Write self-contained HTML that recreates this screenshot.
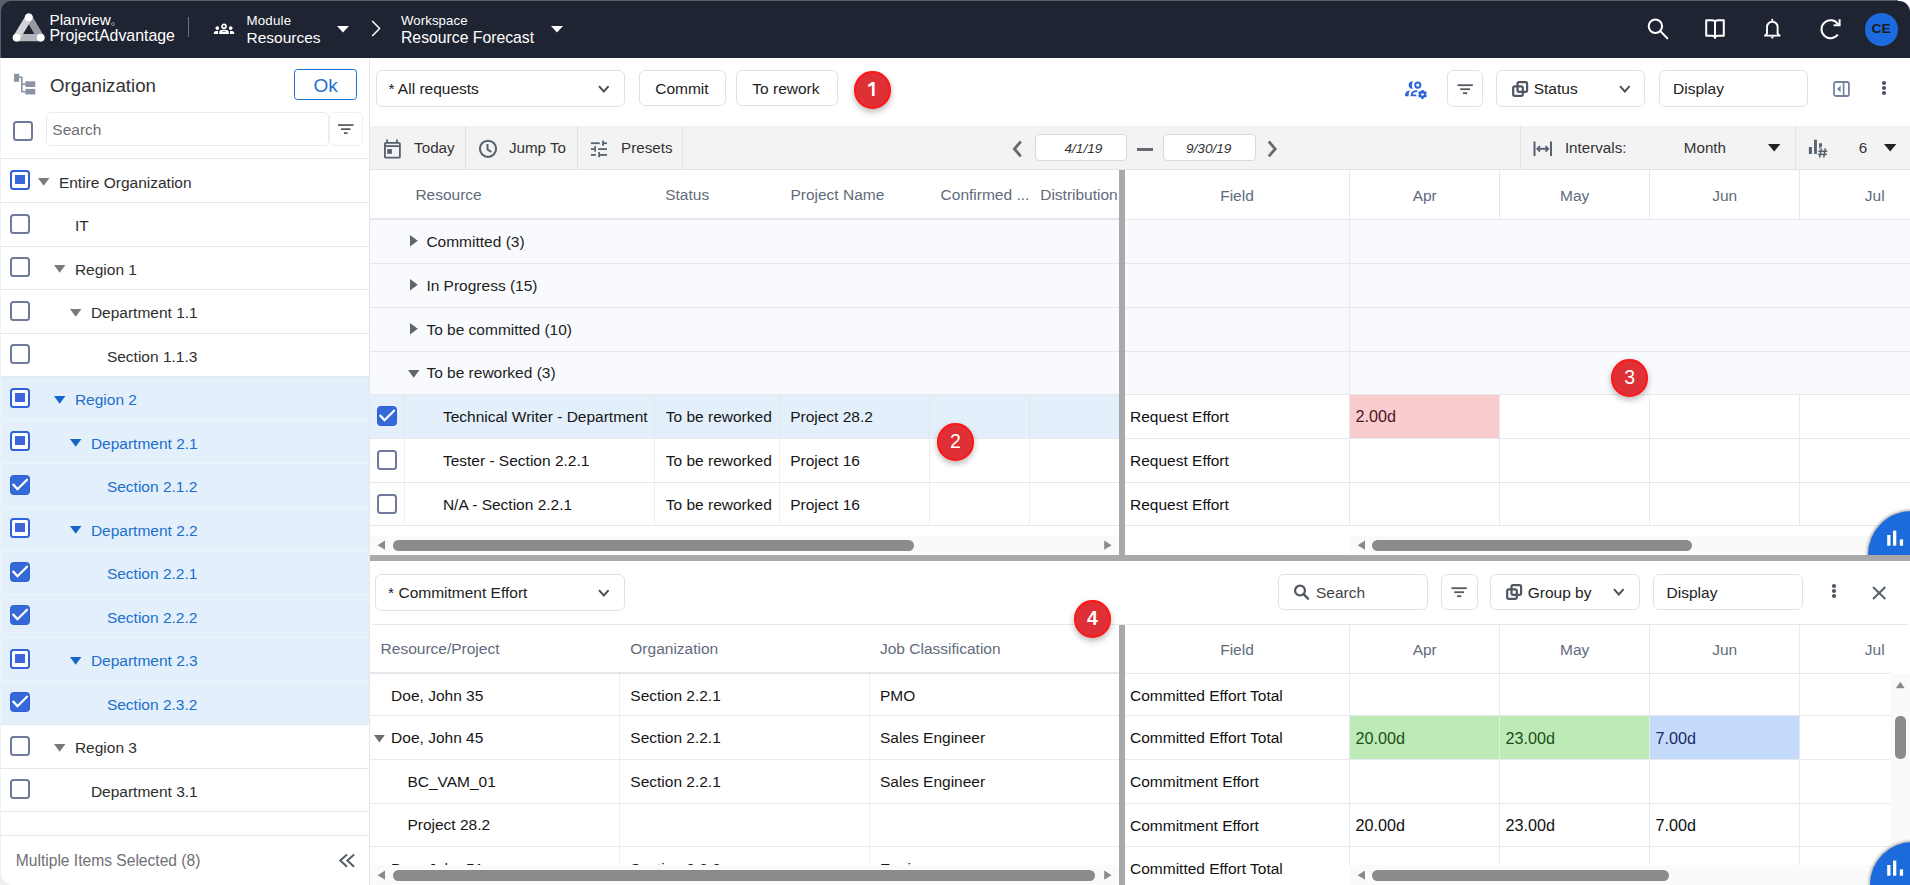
<!DOCTYPE html><html><head><meta charset="utf-8"><title>Resource Forecast</title><style>
*{box-sizing:border-box;margin:0;padding:0}
html,body{width:1910px;height:885px;overflow:hidden;background:#fff;font-family:"Liberation Sans", sans-serif;color:#222}
.a{position:absolute}
.t{position:absolute;white-space:nowrap}
svg{overflow:visible}
</style></head><body>
<div class="a" style="left:0px;top:0px;width:1910px;height:58px;background:#5b5f69;"></div>
<div class="a" style="left:0px;top:0px;width:1910px;height:58px;background:#1f2433;border-radius:10px 10px 0 0;top:1px;left:1px;width:1909px;height:57px"></div>
<div class="a" style="left:1898px;top:0px;width:12px;height:20px;background:#fff;"></div>
<div class="a" style="left:1870px;top:1px;width:40px;height:57px;background:#1f2433;border-radius:0 11px 0 0"></div>
<svg class="a" style="left:0px;top:0px;" width="60" height="58" viewBox="0 0 60 58"><line x1="28.8" y1="17.3" x2="40.7" y2="37.6" stroke="#989aa3" stroke-width="7.2" stroke-linecap="round"/><line x1="16.6" y1="37.6" x2="40.7" y2="37.6" stroke="#b4b6bc" stroke-width="7.2" stroke-linecap="round"/><line x1="28.8" y1="17.3" x2="16.6" y2="37.6" stroke="#d2d4d9" stroke-width="7.2" stroke-linecap="round"/><circle cx="28.8" cy="17.3" r="3.9" fill="#fff"/><circle cx="16.6" cy="37.6" r="3.9" fill="#fff"/><circle cx="40.7" cy="37.6" r="3.9" fill="#fff"/></svg>
<span class="t" style="left:49.5px;top:12px;font-size:15.3px;line-height:15.3px;color:#fff;">Planview</span>
<div class="a" style="left:110.5px;top:21.5px;width:4px;height:4px;border-radius:50%;border:1px solid #8a8d96"></div>
<span class="t" style="left:49.5px;top:28px;font-size:15.9px;line-height:15.9px;color:#fff;">ProjectAdvantage</span>
<div class="a" style="left:188px;top:17px;width:1px;height:20px;background:#6b707a;"></div>
<svg class="a" style="left:213px;top:23px;" width="22" height="12" viewBox="0 0 22 12"><circle cx="11" cy="3.4" r="1.95" fill="none" stroke="#fff" stroke-width="1.7"/><path d="M6,11.1 L6.5,8.1 Q6.8,6.9 8.4,6.9 H13.6 Q15.2,6.9 15.5,8.1 L16,11.1 Z" fill="#fff"/><ellipse cx="11" cy="8.6" rx="2.2" ry="0.5" fill="#7d818a"/><circle cx="4.3" cy="5.1" r="1.85" fill="#fff"/><circle cx="17.7" cy="5.1" r="1.85" fill="#fff"/><path d="M0.8,11.1 V9.8 Q1,8.1 3,8 H5 V11.1 Z" fill="#fff"/><path d="M21.2,11.1 V9.8 Q21,8.1 19,8 H17 V11.1 Z" fill="#fff"/></svg>
<span class="t" style="left:246.5px;top:14px;font-size:13.3px;line-height:13.3px;color:#fff;font-weight:normal;letter-spacing:0.2px">Module</span>
<span class="t" style="left:246.5px;top:29.6px;font-size:15.5px;line-height:15.5px;color:#fff;">Resources</span>
<svg class="a" style="left:337px;top:26px;" width="12" height="7" viewBox="0 0 12 7"><polygon points="0,0 12,0 6,6.5" fill="#fff"/></svg>
<svg class="a" style="left:371px;top:20px;" width="10" height="17" viewBox="0 0 10 17"><polyline points="1.2,1 8.6,8.5 1.2,16" fill="none" stroke="#fff" stroke-width="1.5"/></svg>
<span class="t" style="left:401px;top:14px;font-size:13.2px;line-height:13.2px;color:#fff;letter-spacing:0.1px">Workspace</span>
<span class="t" style="left:401px;top:29.6px;font-size:15.75px;line-height:15.75px;color:#fff;">Resource Forecast</span>
<svg class="a" style="left:550.5px;top:26px;" width="12" height="7" viewBox="0 0 12 7"><polygon points="0,0 12,0 6,6.5" fill="#fff"/></svg>
<svg class="a" style="left:1640px;top:10px;" width="40" height="40" viewBox="0 0 40 40"><circle cx="15.4" cy="16.2" r="6.7" fill="none" stroke="#fff" stroke-width="2"/><line x1="20.3" y1="21.1" x2="27.3" y2="28.2" stroke="#fff" stroke-width="2" stroke-linecap="round"/></svg>
<svg class="a" style="left:1700px;top:10px;" width="30" height="40" viewBox="0 0 30 40"><path d="M6.2,10.2 H12 Q15,10.2 15,12 Q15,10.2 18,10.2 H23.8 V25.8 H18 Q15,25.8 15,28 Q15,25.8 12,25.8 H6.2 Z" fill="none" stroke="#fff" stroke-width="2" stroke-linejoin="round"/><line x1="15" y1="12" x2="15" y2="27.5" stroke="#fff" stroke-width="2"/></svg>
<svg class="a" style="left:1760px;top:10px;" width="30" height="40" viewBox="0 0 30 40"><path d="M4.9,25.6 L7,23.6 V17 A5.3,5.3 0 0 1 17.6,17 V23.6 L19.7,25.6 Z" fill="none" stroke="#fff" stroke-width="1.9" stroke-linejoin="round"/><line x1="12.3" y1="8.8" x2="12.3" y2="11.6" stroke="#fff" stroke-width="1.7"/><polygon points="10.4,26.4 14.2,26.4 12.3,28.9" fill="#fff"/></svg>
<svg class="a" style="left:1815px;top:14px;" width="30" height="30" viewBox="0 0 30 30"><path d="M23.2,10.5 A9,9 0 1 0 22.8,20.5" fill="none" stroke="#fff" stroke-width="2"/><polyline points="24.6,5.2 24.6,11.2 18.6,11.2" fill="none" stroke="#fff" stroke-width="2"/></svg>
<div class="a" style="left:1864.8px;top:12.8px;width:32.8px;height:32.8px;border-radius:50%;background:#1b6bde"></div>
<span class="t" style="left:1871.6px;top:22.200000000000003px;font-size:13.7px;line-height:13.7px;color:#1b1b1b;font-weight:bold">CE</span>
<div class="a" style="left:0px;top:58px;width:369px;height:827px;background:#fff;"></div>
<div class="a" style="left:369px;top:58px;width:1px;height:827px;background:#e3e6ea;"></div>
<svg class="a" style="left:10px;top:70px;" width="30" height="30" viewBox="0 0 30 30"><rect x="4" y="3.8" width="5.2" height="8" fill="#8a94a3"/><rect x="15.3" y="11.3" width="10" height="5.7" fill="#8a94a3"/><rect x="15.3" y="18.9" width="10" height="5.6" fill="#8a94a3"/><polyline points="9,7.3 11.8,7.3 11.8,21.7 15.5,21.7" fill="none" stroke="#8a94a3" stroke-width="1.6"/><line x1="11.8" y1="14.2" x2="15.5" y2="14.2" stroke="#8a94a3" stroke-width="1.6"/></svg>
<span class="t" style="left:50px;top:77px;font-size:18.7px;line-height:18.7px;color:#333;">Organization</span>
<div class="a" style="left:294px;top:68.8px;width:63.19999999999999px;height:31.400000000000006px;background:#fff;border:1.4px solid #1870d0;border-radius:3.5px"></div>
<span class="t" style="left:313.5px;top:76.3px;font-size:19px;line-height:19px;color:#1f6fd1;">Ok</span>
<div class="a" style="left:13px;top:121px;width:20px;height:20px;border:2px solid #6f7a9b;border-radius:3.5px;background:#fff"></div>
<div class="a" style="left:45.5px;top:112.2px;width:283.0px;height:34.3px;background:#fff;border:1px solid #e8eaee;border-radius:5px"></div>
<div class="a" style="left:329px;top:112.2px;width:34.39999999999998px;height:34.3px;background:#fff;border:1px solid #eceef1;border-radius:5px"></div>
<span class="t" style="left:52.3px;top:122.30000000000001px;font-size:15.5px;line-height:15.5px;color:#6e6e73;">Search</span>
<svg class="a" style="left:336px;top:122px;" width="20" height="14" viewBox="0 0 20 14"><rect x="2" y="2.2" width="15.5" height="1.7" fill="#555"/><rect x="5" y="6.3" width="9.5" height="1.7" fill="#555"/><rect x="8" y="10.3" width="3.6" height="1.7" fill="#555"/></svg>
<div class="a" style="left:0px;top:157.8px;width:369px;height:1.2px;background:#e3e8ef;"></div>
<div class="a" style="left:0px;top:376.5px;width:369px;height:43.5px;background:#e3effa;"></div>
<div class="a" style="left:0px;top:420.0px;width:369px;height:43.5px;background:#e3effa;"></div>
<div class="a" style="left:0px;top:463.5px;width:369px;height:43.5px;background:#e3effa;"></div>
<div class="a" style="left:0px;top:507.0px;width:369px;height:43.5px;background:#e3effa;"></div>
<div class="a" style="left:0px;top:550.5px;width:369px;height:43.5px;background:#e3effa;"></div>
<div class="a" style="left:0px;top:594.0px;width:369px;height:43.5px;background:#e3effa;"></div>
<div class="a" style="left:0px;top:637.5px;width:369px;height:43.5px;background:#e3effa;"></div>
<div class="a" style="left:0px;top:681.0px;width:369px;height:43.5px;background:#e3effa;"></div>
<div class="a" style="left:0px;top:202.0px;width:369px;height:1px;background:#e3e8ef;"></div>
<div class="a" style="left:10px;top:170.1px;width:20px;height:20px;border:2px solid #2f61dc;border-radius:3.5px;background:#fff"></div>
<div class="a" style="left:15.3px;top:175.29999999999998px;width:9.3px;height:9.2px;background:#3c67da;"></div>
<svg class="a" style="left:38.3px;top:178.0px;" width="12" height="8" viewBox="0 0 12 8"><polygon points="0,0 11.4,0 5.7,7.8" fill="#7a7a7a"/></svg>
<span class="t" style="left:58.9px;top:174.9px;font-size:15.5px;line-height:15.5px;color:#2e2e2e;">Entire Organization</span>
<div class="a" style="left:0px;top:245.5px;width:369px;height:1px;background:#e3e8ef;"></div>
<div class="a" style="left:10px;top:213.6px;width:20px;height:20px;border:2px solid #6f7a9b;border-radius:3.5px;background:#fff"></div>
<span class="t" style="left:74.9px;top:218.4px;font-size:15.5px;line-height:15.5px;color:#2e2e2e;">IT</span>
<div class="a" style="left:0px;top:289.0px;width:369px;height:1px;background:#e3e8ef;"></div>
<div class="a" style="left:10px;top:257.1px;width:20px;height:20px;border:2px solid #6f7a9b;border-radius:3.5px;background:#fff"></div>
<svg class="a" style="left:54.3px;top:265.0px;" width="12" height="8" viewBox="0 0 12 8"><polygon points="0,0 11.4,0 5.7,7.8" fill="#7a7a7a"/></svg>
<span class="t" style="left:74.9px;top:261.9px;font-size:15.5px;line-height:15.5px;color:#2e2e2e;">Region 1</span>
<div class="a" style="left:0px;top:332.5px;width:369px;height:1px;background:#e3e8ef;"></div>
<div class="a" style="left:10px;top:300.6px;width:20px;height:20px;border:2px solid #6f7a9b;border-radius:3.5px;background:#fff"></div>
<svg class="a" style="left:70.3px;top:308.5px;" width="12" height="8" viewBox="0 0 12 8"><polygon points="0,0 11.4,0 5.7,7.8" fill="#7a7a7a"/></svg>
<span class="t" style="left:90.9px;top:305.4px;font-size:15.5px;line-height:15.5px;color:#2e2e2e;">Department 1.1</span>
<div class="a" style="left:0px;top:376.0px;width:369px;height:1px;background:#e3e8ef;"></div>
<div class="a" style="left:10px;top:344.1px;width:20px;height:20px;border:2px solid #6f7a9b;border-radius:3.5px;background:#fff"></div>
<span class="t" style="left:106.9px;top:348.9px;font-size:15.5px;line-height:15.5px;color:#2e2e2e;">Section 1.1.3</span>
<div class="a" style="left:0px;top:419.5px;width:369px;height:1px;background:#eef4fa;"></div>
<div class="a" style="left:10px;top:387.6px;width:20px;height:20px;border:2px solid #2f61dc;border-radius:3.5px;background:#fff"></div>
<div class="a" style="left:15.3px;top:392.8px;width:9.3px;height:9.2px;background:#3c67da;"></div>
<svg class="a" style="left:54.3px;top:395.5px;" width="12" height="8" viewBox="0 0 12 8"><polygon points="0,0 11.4,0 5.7,7.8" fill="#1565c8"/></svg>
<span class="t" style="left:74.9px;top:392.4px;font-size:15.5px;line-height:15.5px;color:#1b6fce;">Region 2</span>
<div class="a" style="left:0px;top:463.0px;width:369px;height:1px;background:#eef4fa;"></div>
<div class="a" style="left:10px;top:431.1px;width:20px;height:20px;border:2px solid #2f61dc;border-radius:3.5px;background:#fff"></div>
<div class="a" style="left:15.3px;top:436.3px;width:9.3px;height:9.2px;background:#3c67da;"></div>
<svg class="a" style="left:70.3px;top:439.0px;" width="12" height="8" viewBox="0 0 12 8"><polygon points="0,0 11.4,0 5.7,7.8" fill="#1565c8"/></svg>
<span class="t" style="left:90.9px;top:435.9px;font-size:15.5px;line-height:15.5px;color:#1b6fce;">Department 2.1</span>
<div class="a" style="left:0px;top:506.5px;width:369px;height:1px;background:#eef4fa;"></div>
<div class="a" style="left:10px;top:474.6px;width:20px;height:20px;border:1px solid #2d60d6;border-radius:3.5px;background:#3569d8"></div>
<svg class="a" style="left:10px;top:474.6px;" width="20" height="20" viewBox="0 0 20 20"><polyline points="3.3,9.6 7.5,14.2 17,4.8" fill="none" stroke="#fff" stroke-width="2.3" stroke-linecap="round" stroke-linejoin="miter"/></svg>
<span class="t" style="left:106.9px;top:479.4px;font-size:15.5px;line-height:15.5px;color:#1b6fce;">Section 2.1.2</span>
<div class="a" style="left:0px;top:550.0px;width:369px;height:1px;background:#eef4fa;"></div>
<div class="a" style="left:10px;top:518.1px;width:20px;height:20px;border:2px solid #2f61dc;border-radius:3.5px;background:#fff"></div>
<div class="a" style="left:15.3px;top:523.3000000000001px;width:9.3px;height:9.2px;background:#3c67da;"></div>
<svg class="a" style="left:70.3px;top:526.0px;" width="12" height="8" viewBox="0 0 12 8"><polygon points="0,0 11.4,0 5.7,7.8" fill="#1565c8"/></svg>
<span class="t" style="left:90.9px;top:522.9px;font-size:15.5px;line-height:15.5px;color:#1b6fce;">Department 2.2</span>
<div class="a" style="left:0px;top:593.5px;width:369px;height:1px;background:#eef4fa;"></div>
<div class="a" style="left:10px;top:561.6px;width:20px;height:20px;border:1px solid #2d60d6;border-radius:3.5px;background:#3569d8"></div>
<svg class="a" style="left:10px;top:561.6px;" width="20" height="20" viewBox="0 0 20 20"><polyline points="3.3,9.6 7.5,14.2 17,4.8" fill="none" stroke="#fff" stroke-width="2.3" stroke-linecap="round" stroke-linejoin="miter"/></svg>
<span class="t" style="left:106.9px;top:566.4px;font-size:15.5px;line-height:15.5px;color:#1b6fce;">Section 2.2.1</span>
<div class="a" style="left:0px;top:637.0px;width:369px;height:1px;background:#eef4fa;"></div>
<div class="a" style="left:10px;top:605.1px;width:20px;height:20px;border:1px solid #2d60d6;border-radius:3.5px;background:#3569d8"></div>
<svg class="a" style="left:10px;top:605.1px;" width="20" height="20" viewBox="0 0 20 20"><polyline points="3.3,9.6 7.5,14.2 17,4.8" fill="none" stroke="#fff" stroke-width="2.3" stroke-linecap="round" stroke-linejoin="miter"/></svg>
<span class="t" style="left:106.9px;top:609.9px;font-size:15.5px;line-height:15.5px;color:#1b6fce;">Section 2.2.2</span>
<div class="a" style="left:0px;top:680.5px;width:369px;height:1px;background:#eef4fa;"></div>
<div class="a" style="left:10px;top:648.6px;width:20px;height:20px;border:2px solid #2f61dc;border-radius:3.5px;background:#fff"></div>
<div class="a" style="left:15.3px;top:653.8000000000001px;width:9.3px;height:9.2px;background:#3c67da;"></div>
<svg class="a" style="left:70.3px;top:656.5px;" width="12" height="8" viewBox="0 0 12 8"><polygon points="0,0 11.4,0 5.7,7.8" fill="#1565c8"/></svg>
<span class="t" style="left:90.9px;top:653.4px;font-size:15.5px;line-height:15.5px;color:#1b6fce;">Department 2.3</span>
<div class="a" style="left:0px;top:724.0px;width:369px;height:1px;background:#e3e8ef;"></div>
<div class="a" style="left:10px;top:692.1px;width:20px;height:20px;border:1px solid #2d60d6;border-radius:3.5px;background:#3569d8"></div>
<svg class="a" style="left:10px;top:692.1px;" width="20" height="20" viewBox="0 0 20 20"><polyline points="3.3,9.6 7.5,14.2 17,4.8" fill="none" stroke="#fff" stroke-width="2.3" stroke-linecap="round" stroke-linejoin="miter"/></svg>
<span class="t" style="left:106.9px;top:696.9px;font-size:15.5px;line-height:15.5px;color:#1b6fce;">Section 2.3.2</span>
<div class="a" style="left:0px;top:767.5px;width:369px;height:1px;background:#e3e8ef;"></div>
<div class="a" style="left:10px;top:735.6px;width:20px;height:20px;border:2px solid #6f7a9b;border-radius:3.5px;background:#fff"></div>
<svg class="a" style="left:54.3px;top:743.5px;" width="12" height="8" viewBox="0 0 12 8"><polygon points="0,0 11.4,0 5.7,7.8" fill="#7a7a7a"/></svg>
<span class="t" style="left:74.9px;top:740.4px;font-size:15.5px;line-height:15.5px;color:#2e2e2e;">Region 3</span>
<div class="a" style="left:0px;top:811.0px;width:369px;height:1px;background:#e3e8ef;"></div>
<div class="a" style="left:10px;top:779.1px;width:20px;height:20px;border:2px solid #6f7a9b;border-radius:3.5px;background:#fff"></div>
<span class="t" style="left:90.9px;top:783.9px;font-size:15.5px;line-height:15.5px;color:#2e2e2e;">Department 3.1</span>
<div class="a" style="left:0px;top:58px;width:1px;height:827px;background:#eef1f5;"></div>
<div class="a" style="left:0px;top:865px;width:16px;height:20px;background:#f1f1f1;"></div>
<div class="a" style="left:1px;top:858px;width:20px;height:27px;background:#fff;border-bottom-left-radius:13px"></div>
<div class="a" style="left:0px;top:835.3px;width:369px;height:1px;background:#e3e6ea;"></div>
<span class="t" style="left:15.8px;top:852.8px;font-size:15.6px;line-height:15.6px;color:#707075;">Multiple Items Selected (8)</span>
<svg class="a" style="left:336px;top:850.8px;" width="24" height="20" viewBox="0 0 24 20"><polyline points="11,3.5 4.3,9.6 11,15.7" fill="none" stroke="#555c66" stroke-width="2"/><polyline points="18.1,3.5 11.4,9.6 18.1,15.7" fill="none" stroke="#555c66" stroke-width="2"/></svg>
<div class="a" style="left:375.5px;top:70.2px;width:249.10000000000002px;height:36.39999999999999px;background:#fff;border:1px solid #dfe2e7;border-radius:6px"></div>
<span class="t" style="left:388.4px;top:81px;font-size:15.5px;line-height:15.5px;color:#222;">* All requests</span>
<svg class="a" style="left:598.2px;top:84.6px;" width="11.6" height="8.0" viewBox="0 0 11.6 8.0"><polyline points="1,1 5.8,6.5 10.6,1" fill="none" stroke="#4a4f57" stroke-width="1.9"/></svg>
<div class="a" style="left:639.2px;top:70.2px;width:86.59999999999991px;height:35.39999999999999px;background:#fff;border:1px solid #dfe2e7;border-radius:6px"></div>
<span class="t" style="left:655.2px;top:81px;font-size:15.5px;line-height:15.5px;color:#222;">Commit</span>
<div class="a" style="left:736.4px;top:70.2px;width:101.20000000000005px;height:35.39999999999999px;background:#fff;border:1px solid #dfe2e7;border-radius:6px"></div>
<span class="t" style="left:752.3px;top:81px;font-size:15.5px;line-height:15.5px;color:#222;">To rework</span>
<svg class="a" style="left:1400px;top:76px;" width="32" height="26" viewBox="0 0 32 26"><path d="M12.9,5.4 A3.75,3.75 0 1 0 12.9,12.8 A8,8 0 0 1 12.9,5.4 Z" fill="#2c63d7"/><circle cx="17.8" cy="9.1" r="2.65" fill="none" stroke="#2c63d7" stroke-width="1.9"/><path d="M5.1,20.3 L5.1,18.6 Q5.4,15.2 9.8,14.2 Q8.4,16.6 8.6,20.3 Z" fill="#2c63d7"/><path d="M17.3,15.1 Q11.6,15.1 11.6,19.4 H16.2" fill="none" stroke="#2c63d7" stroke-width="1.9"/><g transform="translate(22.5,18.4)" fill="#2c63d7"><circle r="3.3"/><rect x="-1.2" y="-4.5" width="2.4" height="9" rx="0.5"/><rect x="-1.2" y="-4.5" width="2.4" height="9" rx="0.5" transform="rotate(60)"/><rect x="-1.2" y="-4.5" width="2.4" height="9" rx="0.5" transform="rotate(120)"/><circle r="1.25" fill="#fff"/></g></svg>
<div class="a" style="left:1447.4px;top:70.3px;width:36.09999999999991px;height:36.400000000000006px;background:#fff;border:1px solid #dfe2e7;border-radius:6px"></div>
<svg class="a" style="left:1457px;top:84px;" width="18" height="12" viewBox="0 0 18 12"><rect x="0.5" y="0.3" width="15.3" height="1.8" fill="#555a63"/><rect x="3.3" y="4.3" width="9.7" height="1.8" fill="#555a63"/><rect x="6" y="8.3" width="4.3" height="1.8" fill="#555a63"/></svg>
<div class="a" style="left:1496.2px;top:70.3px;width:149.0999999999999px;height:36.400000000000006px;background:#fff;border:1px solid #dfe2e7;border-radius:6px"></div>
<svg class="a" style="left:1511.5px;top:80.8px;" width="18" height="17" viewBox="0 0 18 17"><rect x="5.5" y="1.2" width="9.6" height="9.6" rx="1.6" fill="none" stroke="#4f5661" stroke-width="2.2"/><rect x="1.2" y="5.3" width="9.6" height="9.6" rx="1.6" fill="none" stroke="#4f5661" stroke-width="2.2"/></svg>
<span class="t" style="left:1533.7px;top:81px;font-size:15.5px;line-height:15.5px;color:#222;">Status</span>
<svg class="a" style="left:1619.2px;top:85px;" width="11.6" height="8.0" viewBox="0 0 11.6 8.0"><polyline points="1,1 5.8,6.5 10.6,1" fill="none" stroke="#4a4f57" stroke-width="1.9"/></svg>
<div class="a" style="left:1659.3px;top:70.2px;width:149.20000000000005px;height:36.39999999999999px;background:#fff;border:1px solid #dfe2e7;border-radius:6px"></div>
<span class="t" style="left:1673.1px;top:81px;font-size:15.5px;line-height:15.5px;color:#222;">Display</span>
<svg class="a" style="left:1832px;top:80px;" width="18" height="18" viewBox="0 0 18 18"><rect x="2" y="2" width="14.9" height="14" rx="1.8" fill="none" stroke="#7482a3" stroke-width="1.8"/><line x1="11.6" y1="2" x2="11.6" y2="16" stroke="#7482a3" stroke-width="1.7"/><polygon points="8.6,5.6 8.6,12.2 5,8.9" fill="#7482a3"/></svg>
<svg class="a" style="left:1880.7px;top:80.2px;" width="6" height="16" viewBox="0 0 6 16"><circle cx="3" cy="3" r="2.1" fill="#4b5563"/><circle cx="3" cy="8" r="2.1" fill="#4b5563"/><circle cx="3" cy="13" r="2.1" fill="#4b5563"/></svg>
<div class="a" style="left:370px;top:125.8px;width:1540px;height:43.8px;background:#f3f3f3;"></div>
<div class="a" style="left:370px;top:169.2px;width:1540px;height:1.2px;background:#e1e4e9;"></div>
<div class="a" style="left:465px;top:125.8px;width:1px;height:43.5px;background:#e2e2e2;"></div>
<div class="a" style="left:576.5px;top:125.8px;width:1px;height:43.5px;background:#e2e2e2;"></div>
<div class="a" style="left:681.5px;top:125.8px;width:1px;height:43.5px;background:#e2e2e2;"></div>
<div class="a" style="left:1520px;top:125.8px;width:1px;height:43.5px;background:#e2e2e2;"></div>
<div class="a" style="left:1795px;top:125.8px;width:1px;height:43.5px;background:#e2e2e2;"></div>
<svg class="a" style="left:382px;top:138px;" width="20" height="22" viewBox="0 0 20 22"><rect x="2.9" y="4.8" width="15" height="14.9" rx="1" fill="none" stroke="#56606e" stroke-width="1.8"/><line x1="2.9" y1="8.1" x2="17.9" y2="8.1" stroke="#56606e" stroke-width="1.8"/><line x1="5.1" y1="1.6" x2="5.1" y2="4.8" stroke="#56606e" stroke-width="1.8"/><line x1="14.9" y1="1.6" x2="14.9" y2="4.8" stroke="#56606e" stroke-width="1.8"/><rect x="5.2" y="11.1" width="4.7" height="4.7" fill="#56606e"/></svg>
<span class="t" style="left:414.1px;top:140.3px;font-size:15.2px;line-height:15.2px;color:#333;">Today</span>
<svg class="a" style="left:477px;top:138px;" width="22" height="22" viewBox="0 0 22 22"><circle cx="11" cy="10.8" r="8.1" fill="none" stroke="#56606e" stroke-width="2"/><polyline points="10.5,6 10.5,11.4 14.3,14" fill="none" stroke="#56606e" stroke-width="2"/></svg>
<span class="t" style="left:508.9px;top:140.3px;font-size:15.2px;line-height:15.2px;color:#333;">Jump To</span>
<svg class="a" style="left:589px;top:139px;" width="22" height="20" viewBox="0 0 22 20"><g fill="#56606e"><rect x="1.9" y="3.3" width="8.8" height="1.8"/><rect x="13.1" y="1.6" width="1.8" height="5.1"/><rect x="14.8" y="3.3" width="3.2" height="1.8"/><rect x="1.9" y="9.2" width="3.4" height="1.8"/><rect x="5.2" y="7.2" width="1.8" height="5.4"/><rect x="9.2" y="9.2" width="8.8" height="1.8"/><rect x="1.9" y="15" width="4.9" height="1.8"/><rect x="9.2" y="13.1" width="1.8" height="5.1"/><rect x="10.9" y="15" width="7.1" height="1.8"/></g></svg>
<span class="t" style="left:621px;top:140.3px;font-size:15.2px;line-height:15.2px;color:#333;">Presets</span>
<svg class="a" style="left:1010px;top:139px;" width="15" height="20" viewBox="0 0 15 20"><polyline points="10.8,2.5 4.4,9.9 10.8,17.3" fill="none" stroke="#666a70" stroke-width="2.8"/></svg>
<div class="a" style="left:1034.6px;top:134.4px;width:92.60000000000014px;height:26.900000000000006px;background:#fff;border:1px solid #d8d9dc;border-radius:4px"></div>
<span class="t" style="left:1064.5px;top:141.6px;font-size:13.6px;line-height:13.6px;color:#333;font-style:italic">4/1/19</span>
<div class="a" style="left:1136.7px;top:148.2px;width:16.3px;height:2.6px;background:#666a70;"></div>
<div class="a" style="left:1162.5px;top:134.4px;width:93.0px;height:26.900000000000006px;background:#fff;border:1px solid #d8d9dc;border-radius:4px"></div>
<span class="t" style="left:1186px;top:141.6px;font-size:13.6px;line-height:13.6px;color:#333;font-style:italic">9/30/19</span>
<svg class="a" style="left:1265px;top:139px;" width="15" height="20" viewBox="0 0 15 20"><polyline points="3.8,2.5 10.2,9.9 3.8,17.3" fill="none" stroke="#666a70" stroke-width="2.8"/></svg>
<svg class="a" style="left:1532px;top:140px;" width="22" height="18" viewBox="0 0 22 18"><rect x="1.5" y="1.5" width="2" height="14.5" fill="#56606e"/><rect x="18" y="1.5" width="2" height="14.5" fill="#56606e"/><line x1="5.5" y1="8.8" x2="16" y2="8.8" stroke="#56606e" stroke-width="2"/><polyline points="8,6 5.3,8.8 8,11.6" fill="none" stroke="#56606e" stroke-width="1.8"/><polyline points="13.5,6 16.2,8.8 13.5,11.6" fill="none" stroke="#56606e" stroke-width="1.8"/></svg>
<span class="t" style="left:1564.9px;top:140.1px;font-size:15.2px;line-height:15.2px;color:#333;">Intervals:</span>
<span class="t" style="left:1683.8px;top:140.1px;font-size:15.2px;line-height:15.2px;color:#333;">Month</span>
<svg class="a" style="left:1768.4px;top:144px;" width="13" height="8" viewBox="0 0 13 8"><polygon points="0,0 12.4,0 6.2,7.4" fill="#222"/></svg>
<svg class="a" style="left:1807px;top:138px;" width="24" height="22" viewBox="0 0 24 22"><g fill="#56606e"><rect x="1.9" y="9" width="3" height="6.9"/><rect x="7.1" y="1.7" width="2.8" height="14.2"/><polygon points="12.1,5.2 15,5.2 15,8.6 13.2,9.4 12.4,11.2 12.1,11.2"/></g><g stroke="#56606e" stroke-width="1.5"><line x1="11.3" y1="13.3" x2="20.3" y2="13.3"/><line x1="10.9" y1="16.4" x2="19.9" y2="16.4"/><line x1="14.4" y1="10.3" x2="12.7" y2="19.6"/><line x1="18.4" y1="10.3" x2="16.7" y2="19.6"/></g></svg>
<span class="t" style="left:1858.7px;top:140.1px;font-size:15.2px;line-height:15.2px;color:#333;">6</span>
<svg class="a" style="left:1883.6px;top:144px;" width="13" height="8" viewBox="0 0 13 8"><polygon points="0,0 12.4,0 6.2,7.4" fill="#222"/></svg>
<div class="a" style="left:370px;top:170.4px;width:1540px;height:385px;background:#fff;"></div>
<span class="t" style="left:415.4px;top:187.2px;font-size:15.5px;line-height:15.5px;color:#626b7c;">Resource</span>
<span class="t" style="left:665.2px;top:187.2px;font-size:15.5px;line-height:15.5px;color:#626b7c;">Status</span>
<span class="t" style="left:790.4px;top:187.2px;font-size:15.5px;line-height:15.5px;color:#626b7c;">Project Name</span>
<span class="t" style="left:940.6px;top:187.2px;font-size:15.5px;line-height:15.5px;color:#626b7c;">Confirmed ...</span>
<div class="a" style="left:1040px;top:180px;width:79px;height:30px;overflow:hidden">
<span class="t" style="left:0.2px;top:7.199999999999999px;font-size:15.5px;line-height:15.5px;color:#626b7c;">Distribution</span>
</div>
<div class="a" style="left:370px;top:218.4px;width:749px;height:1.8px;background:#e4e7ec;"></div>
<div class="a" style="left:1125px;top:218.8px;width:785px;height:1px;background:#e6e8ec;"></div>
<span class="t" style="left:1037px;width:400px;text-align:center;top:188px;font-size:15.5px;line-height:15.5px;color:#626b7c;">Field</span>
<span class="t" style="left:1224.7px;width:400px;text-align:center;top:188px;font-size:15.5px;line-height:15.5px;color:#626b7c;">Apr</span>
<span class="t" style="left:1374.7px;width:400px;text-align:center;top:188px;font-size:15.5px;line-height:15.5px;color:#626b7c;">May</span>
<span class="t" style="left:1524.7px;width:400px;text-align:center;top:188px;font-size:15.5px;line-height:15.5px;color:#626b7c;">Jun</span>
<span class="t" style="left:1674.7px;width:400px;text-align:center;top:188px;font-size:15.5px;line-height:15.5px;color:#626b7c;">Jul</span>
<div class="a" style="left:1349px;top:170.4px;width:1px;height:48.5px;background:#e6e8ec;"></div>
<div class="a" style="left:1499px;top:170.4px;width:1px;height:48.5px;background:#e6e8ec;"></div>
<div class="a" style="left:1649px;top:170.4px;width:1px;height:48.5px;background:#e6e8ec;"></div>
<div class="a" style="left:1799px;top:170.4px;width:1px;height:48.5px;background:#e6e8ec;"></div>
<div class="a" style="left:370px;top:219.8px;width:749px;height:43.80000000000001px;background:#f9fafd;"></div>
<div class="a" style="left:1125px;top:219.8px;width:785px;height:43.80000000000001px;background:#f9fafd;"></div>
<div class="a" style="left:370px;top:263.6px;width:749px;height:43.799999999999955px;background:#f9fafd;"></div>
<div class="a" style="left:1125px;top:263.6px;width:785px;height:43.799999999999955px;background:#f9fafd;"></div>
<div class="a" style="left:370px;top:307.4px;width:749px;height:43.700000000000045px;background:#f9fafd;"></div>
<div class="a" style="left:1125px;top:307.4px;width:785px;height:43.700000000000045px;background:#f9fafd;"></div>
<div class="a" style="left:370px;top:351.1px;width:749px;height:43.5px;background:#f9fafd;"></div>
<div class="a" style="left:1125px;top:351.1px;width:785px;height:43.5px;background:#f9fafd;"></div>
<div class="a" style="left:370px;top:263.1px;width:749px;height:1px;background:#e6e8ec;"></div>
<div class="a" style="left:1125px;top:263.1px;width:785px;height:1px;background:#e6e8ec;"></div>
<svg class="a" style="left:410px;top:235.4px;" width="9" height="12" viewBox="0 0 9 12"><polygon points="0,0 7.8,5.7 0,11.4" fill="#60666a"/></svg>
<span class="t" style="left:426.4px;top:234.1px;font-size:15.5px;line-height:15.5px;color:#222;">Committed (3)</span>
<div class="a" style="left:370px;top:306.9px;width:749px;height:1px;background:#e6e8ec;"></div>
<div class="a" style="left:1125px;top:306.9px;width:785px;height:1px;background:#e6e8ec;"></div>
<svg class="a" style="left:410px;top:279.20000000000005px;" width="9" height="12" viewBox="0 0 9 12"><polygon points="0,0 7.8,5.7 0,11.4" fill="#60666a"/></svg>
<span class="t" style="left:426.4px;top:277.9px;font-size:15.5px;line-height:15.5px;color:#222;">In Progress (15)</span>
<div class="a" style="left:370px;top:350.6px;width:749px;height:1px;background:#e6e8ec;"></div>
<div class="a" style="left:1125px;top:350.6px;width:785px;height:1px;background:#e6e8ec;"></div>
<svg class="a" style="left:410px;top:323.0px;" width="9" height="12" viewBox="0 0 9 12"><polygon points="0,0 7.8,5.7 0,11.4" fill="#60666a"/></svg>
<span class="t" style="left:426.4px;top:321.7px;font-size:15.5px;line-height:15.5px;color:#222;">To be committed (10)</span>
<div class="a" style="left:370px;top:394.1px;width:749px;height:1px;background:#e6e8ec;"></div>
<div class="a" style="left:1125px;top:394.1px;width:785px;height:1px;background:#e6e8ec;"></div>
<svg class="a" style="left:408.3px;top:369.70000000000005px;" width="13" height="9" viewBox="0 0 13 9"><polygon points="0,0 11.4,0 5.7,7.8" fill="#60666a"/></svg>
<span class="t" style="left:426.4px;top:365.4px;font-size:15.5px;line-height:15.5px;color:#222;">To be reworked (3)</span>
<div class="a" style="left:1349px;top:219.8px;width:1px;height:306px;background:#e6e8ec;"></div>
<div class="a" style="left:1499px;top:394.6px;width:1px;height:131.5px;background:#e8eaee;"></div>
<div class="a" style="left:1649px;top:394.6px;width:1px;height:131.5px;background:#e8eaee;"></div>
<div class="a" style="left:1799px;top:394.6px;width:1px;height:131.5px;background:#e8eaee;"></div>
<div class="a" style="left:370px;top:394.6px;width:749px;height:43.89999999999998px;background:#e3effa;"></div>
<div class="a" style="left:370px;top:438.0px;width:749px;height:1px;background:#e6e8ec;"></div>
<div class="a" style="left:1125px;top:438.0px;width:785px;height:1px;background:#e6e8ec;"></div>
<div class="a" style="left:404px;top:394.6px;width:1px;height:43.89999999999998px;background:#e3e7ec;"></div>
<div class="a" style="left:654.3px;top:394.6px;width:1px;height:43.89999999999998px;background:#e3e7ec;"></div>
<div class="a" style="left:779px;top:394.6px;width:1px;height:43.89999999999998px;background:#e3e7ec;"></div>
<div class="a" style="left:929px;top:394.6px;width:1px;height:43.89999999999998px;background:#e3e7ec;"></div>
<div class="a" style="left:1029px;top:394.6px;width:1px;height:43.89999999999998px;background:#e3e7ec;"></div>
<div class="a" style="left:377px;top:405.8px;width:20px;height:20px;border:1px solid #2d60d6;border-radius:3.5px;background:#3569d8"></div>
<svg class="a" style="left:377px;top:405.8px;" width="20" height="20" viewBox="0 0 20 20"><polyline points="3.3,9.6 7.5,14.2 17,4.8" fill="none" stroke="#fff" stroke-width="2.3" stroke-linecap="round" stroke-linejoin="miter"/></svg>
<span class="t" style="left:442.9px;top:409.1px;font-size:15.5px;line-height:15.5px;color:#161616;">Technical Writer - Department</span>
<span class="t" style="left:665.8px;top:409.1px;font-size:15.5px;line-height:15.5px;color:#161616;">To be reworked</span>
<span class="t" style="left:790.2px;top:409.1px;font-size:15.5px;line-height:15.5px;color:#161616;">Project 28.2</span>
<span class="t" style="left:1130px;top:409.2px;font-size:15.5px;line-height:15.5px;color:#111;">Request Effort</span>
<div class="a" style="left:1350px;top:395.20000000000005px;width:149px;height:42.799999999999976px;background:#f9cdcd;"></div>
<span class="t" style="left:1355.6px;top:408.0px;font-size:16.2px;line-height:16.2px;color:#4e1524;">2.00d</span>
<div class="a" style="left:370px;top:481.8px;width:749px;height:1px;background:#e6e8ec;"></div>
<div class="a" style="left:1125px;top:481.8px;width:785px;height:1px;background:#e6e8ec;"></div>
<div class="a" style="left:404px;top:438.5px;width:1px;height:43.80000000000001px;background:#eceef1;"></div>
<div class="a" style="left:654.3px;top:438.5px;width:1px;height:43.80000000000001px;background:#eceef1;"></div>
<div class="a" style="left:779px;top:438.5px;width:1px;height:43.80000000000001px;background:#eceef1;"></div>
<div class="a" style="left:929px;top:438.5px;width:1px;height:43.80000000000001px;background:#eceef1;"></div>
<div class="a" style="left:1029px;top:438.5px;width:1px;height:43.80000000000001px;background:#eceef1;"></div>
<div class="a" style="left:377px;top:449.7px;width:20px;height:20px;border:2px solid #6f7a9b;border-radius:3.5px;background:#fff"></div>
<span class="t" style="left:442.9px;top:453.0px;font-size:15.5px;line-height:15.5px;color:#161616;">Tester - Section 2.2.1</span>
<span class="t" style="left:665.8px;top:453.0px;font-size:15.5px;line-height:15.5px;color:#161616;">To be reworked</span>
<span class="t" style="left:790.2px;top:453.0px;font-size:15.5px;line-height:15.5px;color:#161616;">Project 16</span>
<span class="t" style="left:1130px;top:453.1px;font-size:15.5px;line-height:15.5px;color:#111;">Request Effort</span>
<div class="a" style="left:370px;top:525.3px;width:749px;height:1px;background:#e6e8ec;"></div>
<div class="a" style="left:1125px;top:525.3px;width:785px;height:1px;background:#e6e8ec;"></div>
<div class="a" style="left:404px;top:482.3px;width:1px;height:43.49999999999994px;background:#eceef1;"></div>
<div class="a" style="left:654.3px;top:482.3px;width:1px;height:43.49999999999994px;background:#eceef1;"></div>
<div class="a" style="left:779px;top:482.3px;width:1px;height:43.49999999999994px;background:#eceef1;"></div>
<div class="a" style="left:929px;top:482.3px;width:1px;height:43.49999999999994px;background:#eceef1;"></div>
<div class="a" style="left:1029px;top:482.3px;width:1px;height:43.49999999999994px;background:#eceef1;"></div>
<div class="a" style="left:377px;top:493.5px;width:20px;height:20px;border:2px solid #6f7a9b;border-radius:3.5px;background:#fff"></div>
<span class="t" style="left:442.9px;top:496.8px;font-size:15.5px;line-height:15.5px;color:#161616;">N/A - Section 2.2.1</span>
<span class="t" style="left:665.8px;top:496.8px;font-size:15.5px;line-height:15.5px;color:#161616;">To be reworked</span>
<span class="t" style="left:790.2px;top:496.8px;font-size:15.5px;line-height:15.5px;color:#161616;">Project 16</span>
<span class="t" style="left:1130px;top:496.9px;font-size:15.5px;line-height:15.5px;color:#111;">Request Effort</span>
<div class="a" style="left:370px;top:535.9px;width:749px;height:19.2px;background:#fafafa;"></div>
<svg class="a" style="left:376px;top:539px;" width="12" height="13" viewBox="0 0 12 13"><polygon points="1.6,6.2 9,1.6 9,10.8" fill="#8a8a8a"/></svg>
<div class="a" style="left:393px;top:540px;width:520.5px;height:11.2px;background:#8b8b8b;border-radius:6px"></div>
<svg class="a" style="left:1101px;top:539px;" width="12" height="13" viewBox="0 0 12 13"><polygon points="10.6,6.2 3.2,1.6 3.2,10.8" fill="#8a8a8a"/></svg>
<div class="a" style="left:1350px;top:535.9px;width:560px;height:19.2px;background:#fafafa;"></div>
<svg class="a" style="left:1354px;top:539px;" width="12" height="13" viewBox="0 0 12 13"><polygon points="3.6,6.2 11,1.6 11,10.8" fill="#8a8a8a"/></svg>
<div class="a" style="left:1372.4px;top:540.3px;width:319.5px;height:10.6px;background:#8b8b8b;border-radius:6px"></div>
<div class="a" style="left:1119.2px;top:170.4px;width:5.8px;height:385px;background:#a9a9a9;"></div>
<div class="a" style="left:370px;top:555.1px;width:1540px;height:5.6px;background:#a9a9a9;"></div>
<div class="a" style="left:1868px;top:511px;width:88px;height:88px;border-radius:50%;background:#1c6bdc;box-shadow:-1px -1px 3px rgba(0,0,0,.35);clip-path:inset(-10px -10px 44px -10px)"></div>
<svg class="a" style="left:1885px;top:529px;" width="20" height="18" viewBox="0 0 20 18"><rect x="2.2" y="6" width="3.3" height="10.7" fill="#fff"/><rect x="8" y="1.6" width="3.3" height="15.1" fill="#fff"/><rect x="14.8" y="10.4" width="3.3" height="6.3" fill="#fff"/></svg>
<div class="a" style="left:370px;top:560.7px;width:1540px;height:325px;background:#fff;"></div>
<div class="a" style="left:375.4px;top:574.4px;width:249.20000000000005px;height:36.39999999999998px;background:#fff;border:1px solid #dfe2e7;border-radius:6px"></div>
<span class="t" style="left:388.1px;top:585px;font-size:15.5px;line-height:15.5px;color:#222;">* Commitment Effort</span>
<svg class="a" style="left:598.2px;top:588.6px;" width="11.6" height="8.0" viewBox="0 0 11.6 8.0"><polyline points="1,1 5.8,6.5 10.6,1" fill="none" stroke="#4a4f57" stroke-width="1.9"/></svg>
<div class="a" style="left:1278.2px;top:574.2px;width:149.39999999999986px;height:36.09999999999991px;background:#fff;border:1px solid #dfe2e7;border-radius:6px"></div>
<svg class="a" style="left:1292px;top:583px;" width="20" height="20" viewBox="0 0 20 20"><circle cx="8" cy="7.6" r="4.9" fill="none" stroke="#4f5661" stroke-width="2.2"/><line x1="11.6" y1="11.2" x2="16" y2="15.6" stroke="#4f5661" stroke-width="2.4" stroke-linecap="round"/></svg>
<span class="t" style="left:1316px;top:585.2px;font-size:15.5px;line-height:15.5px;color:#444;">Search</span>
<div class="a" style="left:1441.1px;top:574.2px;width:36.600000000000136px;height:36.09999999999991px;background:#fff;border:1px solid #dfe2e7;border-radius:6px"></div>
<svg class="a" style="left:1450.7px;top:587.3px;" width="18" height="12" viewBox="0 0 18 12"><rect x="0.5" y="0.3" width="15.3" height="1.8" fill="#555a63"/><rect x="3.3" y="4.3" width="9.7" height="1.8" fill="#555a63"/><rect x="6" y="8.3" width="4.3" height="1.8" fill="#555a63"/></svg>
<div class="a" style="left:1490.1px;top:574.2px;width:149.5px;height:36.09999999999991px;background:#fff;border:1px solid #dfe2e7;border-radius:6px"></div>
<svg class="a" style="left:1505.6px;top:583.6px;" width="18" height="17" viewBox="0 0 18 17"><rect x="5.5" y="1.2" width="9.6" height="9.6" rx="1.6" fill="none" stroke="#4f5661" stroke-width="2.2"/><rect x="1.2" y="5.3" width="9.6" height="9.6" rx="1.6" fill="none" stroke="#4f5661" stroke-width="2.2"/></svg>
<span class="t" style="left:1527.7px;top:585.2px;font-size:15.5px;line-height:15.5px;color:#222;">Group by</span>
<svg class="a" style="left:1613.2px;top:588.4px;" width="11.6" height="8.0" viewBox="0 0 11.6 8.0"><polyline points="1,1 5.8,6.5 10.6,1" fill="none" stroke="#4a4f57" stroke-width="1.9"/></svg>
<div class="a" style="left:1653.4px;top:574.2px;width:149.19999999999982px;height:36.299999999999955px;background:#fff;border:1px solid #dfe2e7;border-radius:6px"></div>
<span class="t" style="left:1666.6px;top:585.2px;font-size:15.5px;line-height:15.5px;color:#222;">Display</span>
<svg class="a" style="left:1831px;top:583px;" width="6" height="16" viewBox="0 0 6 16"><circle cx="3" cy="3" r="2.1" fill="#4b5563"/><circle cx="3" cy="8" r="2.1" fill="#4b5563"/><circle cx="3" cy="13" r="2.1" fill="#4b5563"/></svg>
<svg class="a" style="left:1870px;top:584px;" width="18" height="18" viewBox="0 0 18 18"><g stroke="#5a636e" stroke-width="2.1"><line x1="3" y1="3" x2="15.3" y2="15"/><line x1="15.3" y1="3" x2="3" y2="15"/></g></svg>
<div class="a" style="left:371.5px;top:624.3px;width:1536.5px;height:1px;background:#e6e8ec;"></div>
<span class="t" style="left:380.6px;top:641.3px;font-size:15.5px;line-height:15.5px;color:#626b7c;">Resource/Project</span>
<span class="t" style="left:630.3px;top:641.3px;font-size:15.5px;line-height:15.5px;color:#626b7c;">Organization</span>
<span class="t" style="left:880px;top:641.3px;font-size:15.5px;line-height:15.5px;color:#626b7c;">Job Classification</span>
<div class="a" style="left:370px;top:672px;width:749px;height:1.8px;background:#e4e7ec;"></div>
<div class="a" style="left:1125px;top:672.6px;width:766px;height:1px;background:#e6e8ec;"></div>
<span class="t" style="left:1037px;width:400px;text-align:center;top:642.2px;font-size:15.5px;line-height:15.5px;color:#626b7c;">Field</span>
<span class="t" style="left:1224.7px;width:400px;text-align:center;top:642.2px;font-size:15.5px;line-height:15.5px;color:#626b7c;">Apr</span>
<span class="t" style="left:1374.7px;width:400px;text-align:center;top:642.2px;font-size:15.5px;line-height:15.5px;color:#626b7c;">May</span>
<span class="t" style="left:1524.7px;width:400px;text-align:center;top:642.2px;font-size:15.5px;line-height:15.5px;color:#626b7c;">Jun</span>
<span class="t" style="left:1674.7px;width:400px;text-align:center;top:642.2px;font-size:15.5px;line-height:15.5px;color:#626b7c;">Jul</span>
<div class="a" style="left:1349px;top:624.8px;width:1px;height:241px;background:#e8eaee;"></div>
<div class="a" style="left:1499px;top:624.8px;width:1px;height:241px;background:#e8eaee;"></div>
<div class="a" style="left:1649px;top:624.8px;width:1px;height:241px;background:#e8eaee;"></div>
<div class="a" style="left:1799px;top:624.8px;width:1px;height:241px;background:#e8eaee;"></div>
<div class="a" style="left:370px;top:715.0px;width:749px;height:1px;background:#e8eaee;"></div>
<div class="a" style="left:1125px;top:715.0px;width:766px;height:1px;background:#e8eaee;"></div>
<div class="a" style="left:619.3px;top:673.5px;width:1px;height:42.10000000000002px;background:#eceef1;"></div>
<div class="a" style="left:869.3px;top:673.5px;width:1px;height:42.10000000000002px;background:#eceef1;"></div>
<span class="t" style="left:391.1px;top:687.6px;font-size:15.5px;line-height:15.5px;color:#161616;">Doe, John 35</span>
<span class="t" style="left:630.3px;top:687.6px;font-size:15.5px;line-height:15.5px;color:#161616;">Section 2.2.1</span>
<span class="t" style="left:880px;top:687.6px;font-size:15.5px;line-height:15.5px;color:#161616;">PMO</span>
<span class="t" style="left:1130px;top:688.0px;font-size:15.5px;line-height:15.5px;color:#111;">Committed Effort Total</span>
<div class="a" style="left:370px;top:758.8px;width:749px;height:1px;background:#e8eaee;"></div>
<div class="a" style="left:1125px;top:758.8px;width:766px;height:1px;background:#e8eaee;"></div>
<div class="a" style="left:619.3px;top:715.6px;width:1px;height:43.799999999999955px;background:#eceef1;"></div>
<div class="a" style="left:869.3px;top:715.6px;width:1px;height:43.799999999999955px;background:#eceef1;"></div>
<svg class="a" style="left:373.8px;top:735.0px;" width="12" height="9" viewBox="0 0 12 9"><polygon points="0,0 10.8,0 5.4,7.5" fill="#6b7073"/></svg>
<span class="t" style="left:391.1px;top:729.7px;font-size:15.5px;line-height:15.5px;color:#161616;">Doe, John 45</span>
<span class="t" style="left:630.3px;top:729.7px;font-size:15.5px;line-height:15.5px;color:#161616;">Section 2.2.1</span>
<span class="t" style="left:880px;top:729.7px;font-size:15.5px;line-height:15.5px;color:#161616;">Sales Engineer</span>
<span class="t" style="left:1130px;top:730.1px;font-size:15.5px;line-height:15.5px;color:#111;">Committed Effort Total</span>
<div class="a" style="left:1350px;top:716.1px;width:149px;height:42.69999999999995px;background:#bdebb5;"></div>
<div class="a" style="left:1500px;top:716.1px;width:149px;height:42.69999999999995px;background:#bdebb5;"></div>
<div class="a" style="left:1650px;top:716.1px;width:149px;height:42.69999999999995px;background:#c4dbfb;"></div>
<span class="t" style="left:1355.6px;top:729.6px;font-size:16.2px;line-height:16.2px;color:#1d4f1d;">20.00d</span>
<span class="t" style="left:1505.6px;top:729.6px;font-size:16.2px;line-height:16.2px;color:#1d4f1d;">23.00d</span>
<span class="t" style="left:1655.6px;top:729.6px;font-size:16.2px;line-height:16.2px;color:#1b2a66;">7.00d</span>
<div class="a" style="left:370px;top:802.6px;width:749px;height:1px;background:#e8eaee;"></div>
<div class="a" style="left:1125px;top:802.6px;width:766px;height:1px;background:#e8eaee;"></div>
<div class="a" style="left:619.3px;top:759.4px;width:1px;height:43.80000000000007px;background:#eceef1;"></div>
<div class="a" style="left:869.3px;top:759.4px;width:1px;height:43.80000000000007px;background:#eceef1;"></div>
<span class="t" style="left:407.40000000000003px;top:773.5px;font-size:15.5px;line-height:15.5px;color:#161616;">BC_VAM_01</span>
<span class="t" style="left:630.3px;top:773.5px;font-size:15.5px;line-height:15.5px;color:#161616;">Section 2.2.1</span>
<span class="t" style="left:880px;top:773.5px;font-size:15.5px;line-height:15.5px;color:#161616;">Sales Engineer</span>
<span class="t" style="left:1130px;top:773.9px;font-size:15.5px;line-height:15.5px;color:#111;">Commitment Effort</span>
<div class="a" style="left:370px;top:846.1999999999999px;width:749px;height:1px;background:#e8eaee;"></div>
<div class="a" style="left:1125px;top:846.1999999999999px;width:766px;height:1px;background:#e8eaee;"></div>
<div class="a" style="left:619.3px;top:803.2px;width:1px;height:43.59999999999991px;background:#eceef1;"></div>
<div class="a" style="left:869.3px;top:803.2px;width:1px;height:43.59999999999991px;background:#eceef1;"></div>
<span class="t" style="left:407.40000000000003px;top:817.3px;font-size:15.5px;line-height:15.5px;color:#161616;">Project 28.2</span>
<span class="t" style="left:1130px;top:817.7px;font-size:15.5px;line-height:15.5px;color:#111;">Commitment Effort</span>
<span class="t" style="left:1355.6px;top:817.2px;font-size:16.2px;line-height:16.2px;color:#111;">20.00d</span>
<span class="t" style="left:1505.6px;top:817.2px;font-size:16.2px;line-height:16.2px;color:#111;">23.00d</span>
<span class="t" style="left:1655.6px;top:817.2px;font-size:16.2px;line-height:16.2px;color:#111;">7.00d</span>
<div class="a" style="left:370px;top:889.8px;width:749px;height:1px;background:#e8eaee;"></div>
<div class="a" style="left:1125px;top:889.8px;width:766px;height:1px;background:#e8eaee;"></div>
<div class="a" style="left:619.3px;top:846.8px;width:1px;height:43.60000000000002px;background:#eceef1;"></div>
<div class="a" style="left:869.3px;top:846.8px;width:1px;height:43.60000000000002px;background:#eceef1;"></div>
<span class="t" style="left:391.1px;top:860.9px;font-size:15.5px;line-height:15.5px;color:#161616;">Doe, John 51</span>
<span class="t" style="left:630.3px;top:860.9px;font-size:15.5px;line-height:15.5px;color:#161616;">Section 2.2.2</span>
<span class="t" style="left:880px;top:860.9px;font-size:15.5px;line-height:15.5px;color:#161616;">Engineer</span>
<span class="t" style="left:1130px;top:861.3px;font-size:15.5px;line-height:15.5px;color:#111;">Committed Effort Total</span>
<div class="a" style="left:1349px;top:673.5px;width:1px;height:192px;background:#e8eaee;"></div>
<div class="a" style="left:1499px;top:673.5px;width:1px;height:192px;background:#e8eaee;"></div>
<div class="a" style="left:1649px;top:673.5px;width:1px;height:192px;background:#e8eaee;"></div>
<div class="a" style="left:1799px;top:673.5px;width:1px;height:192px;background:#e8eaee;"></div>
<div class="a" style="left:370px;top:864.6px;width:749px;height:21px;background:#fafafa;"></div>
<svg class="a" style="left:376px;top:869px;" width="12" height="13" viewBox="0 0 12 13"><polygon points="1.6,6.2 9,1.6 9,10.8" fill="#8a8a8a"/></svg>
<div class="a" style="left:393px;top:869.7px;width:702px;height:11.2px;background:#8b8b8b;border-radius:6px"></div>
<svg class="a" style="left:1101px;top:869px;" width="12" height="13" viewBox="0 0 12 13"><polygon points="10.6,6.2 3.2,1.6 3.2,10.8" fill="#8a8a8a"/></svg>
<div class="a" style="left:1350px;top:865.4px;width:560px;height:20px;background:#fafafa;"></div>
<svg class="a" style="left:1354px;top:869px;" width="12" height="13" viewBox="0 0 12 13"><polygon points="3.6,6.2 11,1.6 11,10.8" fill="#8a8a8a"/></svg>
<div class="a" style="left:1372.4px;top:870.4px;width:297px;height:10.2px;background:#8b8b8b;border-radius:6px"></div>
<div class="a" style="left:1891px;top:673.8px;width:19px;height:192px;background:#fafafa;"></div>
<svg class="a" style="left:1895px;top:680px;" width="12" height="10" viewBox="0 0 12 10"><polygon points="0.8,8.2 5.3,1.8 9.8,8.2" fill="#8a8a8a"/></svg>
<div class="a" style="left:1895.4px;top:716.3px;width:10.3px;height:42.3px;background:#8b8b8b;border-radius:5px"></div>
<div class="a" style="left:1119.2px;top:624.5px;width:5.8px;height:261px;background:#a9a9a9;"></div>
<div class="a" style="left:1869.5px;top:841.5px;width:86px;height:86px;border-radius:50%;background:#1c6bdc;box-shadow:-1px -1px 3px rgba(0,0,0,.35)"></div>
<svg class="a" style="left:1885px;top:859px;" width="20" height="18" viewBox="0 0 20 18"><rect x="2.2" y="6" width="3.3" height="10.7" fill="#fff"/><rect x="8" y="1.6" width="3.3" height="15.1" fill="#fff"/><rect x="14.8" y="10.4" width="3.3" height="6.3" fill="#fff"/></svg>
<div class="a" style="left:853.7px;top:70.80000000000001px;width:37.8px;height:37.8px;border-radius:50%;background:#de3036;border:2px solid #ff1616;box-shadow:0 3px 6px rgba(0,0,0,.28)"></div>
<svg class="a" style="left:865.6px;top:80.7px;" width="12" height="16" viewBox="0 0 12 16"><path d="M1.8,4.0 L5.9,1.0 H8.6 V15 H5.9 V4.5 L2.4,5.9 Z" fill="#fff"/></svg>
<div class="a" style="left:936.6px;top:422.8px;width:37.8px;height:37.8px;border-radius:50%;background:#de3036;border:2px solid #ff1616;box-shadow:0 3px 6px rgba(0,0,0,.28)"></div>
<span class="t" style="left:755.5px;width:400px;text-align:center;top:432.09999999999997px;font-size:19.5px;line-height:19.5px;color:#fff;">2</span>
<div class="a" style="left:1610.6999999999998px;top:358.8px;width:37.8px;height:37.8px;border-radius:50%;background:#de3036;border:2px solid #ff1616;box-shadow:0 3px 6px rgba(0,0,0,.28)"></div>
<span class="t" style="left:1429.6px;width:400px;text-align:center;top:368.09999999999997px;font-size:19.5px;line-height:19.5px;color:#fff;">3</span>
<div class="a" style="left:1073.6px;top:599.8000000000001px;width:37.8px;height:37.8px;border-radius:50%;background:#de3036;border:2px solid #ff1616;box-shadow:0 3px 6px rgba(0,0,0,.28)"></div>
<span class="t" style="left:892.5px;width:400px;text-align:center;top:609.1px;font-size:19.5px;line-height:19.5px;color:#fff;font-weight:bold">4</span>
</body></html>
